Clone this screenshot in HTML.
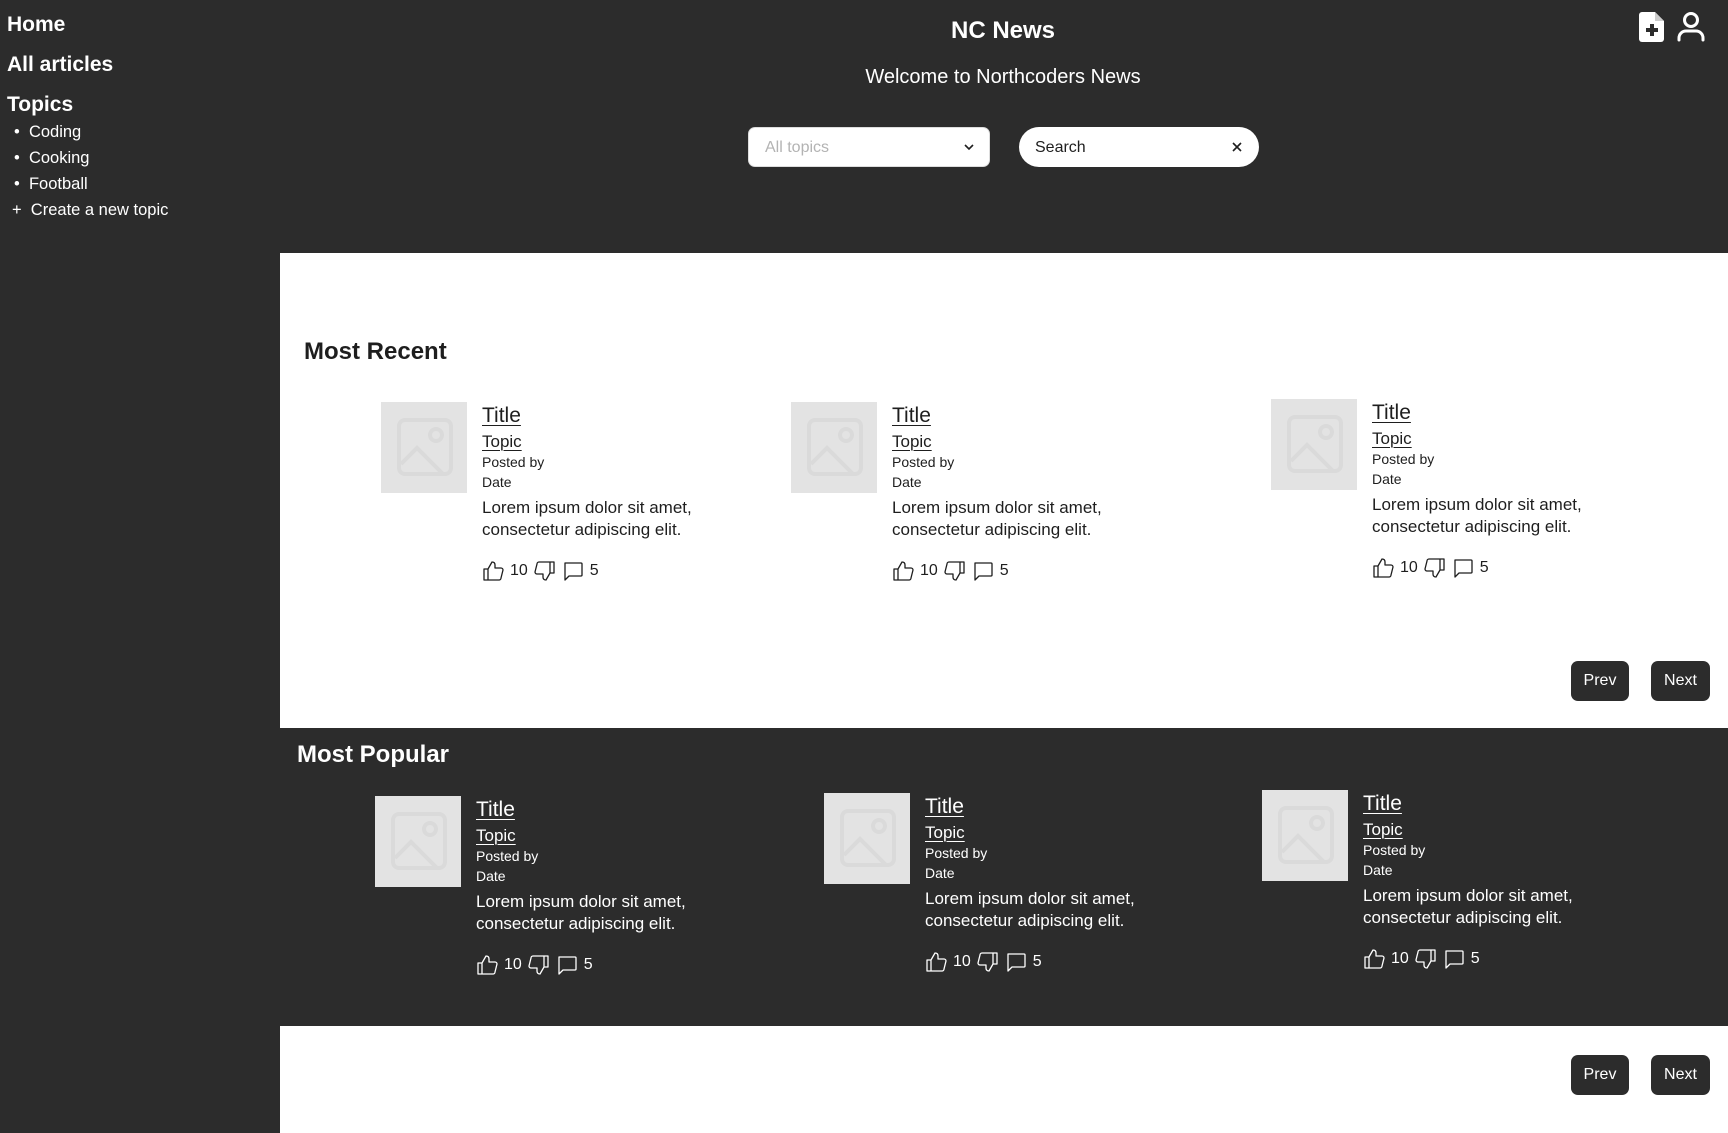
<!DOCTYPE html>
<html><head><meta charset="utf-8"><style>
*{margin:0;padding:0;box-sizing:border-box}
body{width:1728px;height:1133px;background:#2c2c2c;font-family:"Liberation Sans",sans-serif;position:relative;overflow:hidden;color:#fff}
.a{position:absolute;white-space:nowrap}
.w{position:absolute;background:#fff}
.card{position:absolute;width:400px;height:190px}
.card .img{position:absolute;left:0;top:0;width:86px;height:91px;background:#e3e3e3}
.card .t{position:absolute;left:101px;white-space:nowrap;line-height:1}
.dark .t{color:#fff}
.light .t{color:#1e1e1e}
.ti{top:3px;font-size:21px;text-decoration:underline;text-underline-offset:3px;text-decoration-thickness:1px}
.tp{top:31px;font-size:17px;text-decoration:underline;text-underline-offset:3px;text-decoration-thickness:1px}
.pb{top:53px;font-size:14px}
.dt{top:73px;font-size:14px}
.lo{top:95px;font-size:17px;line-height:22px!important}
.ic{top:158px;font-size:16px;display:flex;align-items:center;gap:6px}
.btn{position:absolute;height:40px;background:#2c2c2c;color:#fff;border-radius:7px;font-size:16px;display:flex;align-items:center;justify-content:center}
.light .ic{color:#1e1e1e}.dark .ic{color:#fff}
</style></head><body>
<div class="a" style="left:7px;top:13px;font-size:21px;font-weight:bold">Home</div>
<div class="a" style="left:7px;top:53px;font-size:21px;font-weight:bold">All articles</div>
<div class="a" style="left:7px;top:93px;font-size:21px;font-weight:bold">Topics</div>
<div class="a" style="left:14px;top:119px;font-size:16.5px;line-height:26px">
<div>•&nbsp;&nbsp;Coding</div><div>•&nbsp;&nbsp;Cooking</div><div>•&nbsp;&nbsp;Football</div><div style="margin-left:-2px">+&nbsp;&nbsp;Create a new topic</div></div>
<div class="a" style="left:903px;width:200px;text-align:center;top:17px;font-size:24px;font-weight:bold">NC News</div>
<div class="a" style="left:803px;width:400px;text-align:center;top:66px;font-size:20px">Welcome to Northcoders News</div>
<div class="a" style="left:748px;top:127px;width:242px;height:40px;background:#fff;border-radius:7px;border:1px solid #ddd;color:#b3b3b3;font-size:16px;padding:11px 16px">All topics
<svg style="position:absolute;right:14px;top:14px" width="12" height="10" viewBox="0 0 12 10"><path d="M2 3l4 4 4-4" stroke="#1e1e1e" stroke-width="1.6" fill="none"/></svg></div>
<div class="a" style="left:1019px;top:127px;width:240px;height:40px;background:#fff;border-radius:20px;color:#1e1e1e;font-size:16px;padding:12px 16px">Search
<svg style="position:absolute;right:17px;top:15px" width="10" height="10" viewBox="0 0 10 10"><path d="M1 1l8 8M9 1l-8 8" stroke="#1e1e1e" stroke-width="1.6"/></svg></div>
<svg class="a" style="left:1639px;top:11px" width="26" height="32" viewBox="0 0 26 32"><path d="M3 1h13l9 9v18a3 3 0 0 1-3 3H3a3 3 0 0 1-3-3V4a3 3 0 0 1 3-3z" fill="#fff"/><path d="M16 1v9h9" fill="#ccc"/><path d="M13 13v12M7 19h12" stroke="#2c2c2c" stroke-width="4"/></svg>
<svg class="a" style="left:1677px;top:11px" width="28" height="31" viewBox="0 0 28 31"><circle cx="14" cy="9" r="6.5" stroke="#fff" stroke-width="3" fill="none"/><path d="M2 29v-2a7 7 0 0 1 7-7h10a7 7 0 0 1 7 7v2" stroke="#fff" stroke-width="3" fill="none" stroke-linecap="round"/></svg>

<div class="w" style="left:280px;top:253px;width:1448px;height:475px"></div>
<div class="w" style="left:280px;top:1026px;width:1448px;height:107px"></div>
<div class="a" style="left:304px;top:338px;font-size:24px;color:#1e1e1e;font-weight:600">Most Recent</div>
<div class="a" style="left:297px;top:741px;font-size:24px;color:#fff;font-weight:600">Most Popular</div>

<svg width="0" height="0" style="position:absolute"><defs>
<symbol id="im" viewBox="0 0 86 91"><rect x="18" y="18" width="52" height="54" rx="6" stroke="#dadada" stroke-width="4" fill="none"/><circle cx="55" cy="33" r="6" stroke="#dadada" stroke-width="4" fill="none"/><path d="M20 62l16-16 26 26" stroke="#dadada" stroke-width="4" fill="none"/></symbol>
<symbol id="up" viewBox="0 0 22 22"><path d="M6 9v11H2V9zM6 9l4-7c2 0 3 1 3 3v3h6a2 2 0 0 1 2 2l-2 8a2 2 0 0 1-2 2H6" fill="none" stroke="currentColor" stroke-width="1.3" stroke-linejoin="round"/></symbol>
<symbol id="dn" viewBox="0 0 22 22"><path d="M16 13V2h4v11zM16 13l-4 7c-2 0-3-1-3-3v-3H3a2 2 0 0 1-2-2l2-8a2 2 0 0 1 2-2h11" fill="none" stroke="currentColor" stroke-width="1.3" stroke-linejoin="round"/></symbol>
<symbol id="cm" viewBox="0 0 22 22"><path d="M3 3h16a1 1 0 0 1 1 1v11a1 1 0 0 1-1 1H7l-4 4z" fill="none" stroke="currentColor" stroke-width="1.3" stroke-linejoin="round"/></symbol>
</defs></svg>

<div class="card light" style="left:381px;top:402px"><svg class="img" viewBox="0 0 86 91"><use href="#im"/></svg><div class="t ti">Title</div><div class="t tp">Topic</div><div class="t pb">Posted by</div><div class="t dt">Date</div><div class="t lo">Lorem ipsum dolor sit amet,<br>consectetur adipiscing elit.</div><div class="t ic"><svg width="22" height="22"><use href="#up"/></svg>10<svg width="22" height="22"><use href="#dn"/></svg><svg width="22" height="22"><use href="#cm"/></svg>5</div></div>
<div class="card light" style="left:791px;top:402px"><svg class="img" viewBox="0 0 86 91"><use href="#im"/></svg><div class="t ti">Title</div><div class="t tp">Topic</div><div class="t pb">Posted by</div><div class="t dt">Date</div><div class="t lo">Lorem ipsum dolor sit amet,<br>consectetur adipiscing elit.</div><div class="t ic"><svg width="22" height="22"><use href="#up"/></svg>10<svg width="22" height="22"><use href="#dn"/></svg><svg width="22" height="22"><use href="#cm"/></svg>5</div></div>
<div class="card light" style="left:1271px;top:399px"><svg class="img" viewBox="0 0 86 91"><use href="#im"/></svg><div class="t ti">Title</div><div class="t tp">Topic</div><div class="t pb">Posted by</div><div class="t dt">Date</div><div class="t lo">Lorem ipsum dolor sit amet,<br>consectetur adipiscing elit.</div><div class="t ic"><svg width="22" height="22"><use href="#up"/></svg>10<svg width="22" height="22"><use href="#dn"/></svg><svg width="22" height="22"><use href="#cm"/></svg>5</div></div>

<div class="card dark" style="left:375px;top:796px"><svg class="img" viewBox="0 0 86 91"><use href="#im"/></svg><div class="t ti">Title</div><div class="t tp">Topic</div><div class="t pb">Posted by</div><div class="t dt">Date</div><div class="t lo">Lorem ipsum dolor sit amet,<br>consectetur adipiscing elit.</div><div class="t ic"><svg width="22" height="22"><use href="#up"/></svg>10<svg width="22" height="22"><use href="#dn"/></svg><svg width="22" height="22"><use href="#cm"/></svg>5</div></div>
<div class="card dark" style="left:824px;top:793px"><svg class="img" viewBox="0 0 86 91"><use href="#im"/></svg><div class="t ti">Title</div><div class="t tp">Topic</div><div class="t pb">Posted by</div><div class="t dt">Date</div><div class="t lo">Lorem ipsum dolor sit amet,<br>consectetur adipiscing elit.</div><div class="t ic"><svg width="22" height="22"><use href="#up"/></svg>10<svg width="22" height="22"><use href="#dn"/></svg><svg width="22" height="22"><use href="#cm"/></svg>5</div></div>
<div class="card dark" style="left:1262px;top:790px"><svg class="img" viewBox="0 0 86 91"><use href="#im"/></svg><div class="t ti">Title</div><div class="t tp">Topic</div><div class="t pb">Posted by</div><div class="t dt">Date</div><div class="t lo">Lorem ipsum dolor sit amet,<br>consectetur adipiscing elit.</div><div class="t ic"><svg width="22" height="22"><use href="#up"/></svg>10<svg width="22" height="22"><use href="#dn"/></svg><svg width="22" height="22"><use href="#cm"/></svg>5</div></div>

<div class="btn" style="left:1571px;top:661px;width:58px">Prev</div>
<div class="btn" style="left:1651px;top:661px;width:59px">Next</div>
<div class="btn" style="left:1571px;top:1055px;width:58px">Prev</div>
<div class="btn" style="left:1651px;top:1055px;width:59px">Next</div>
</body></html>
